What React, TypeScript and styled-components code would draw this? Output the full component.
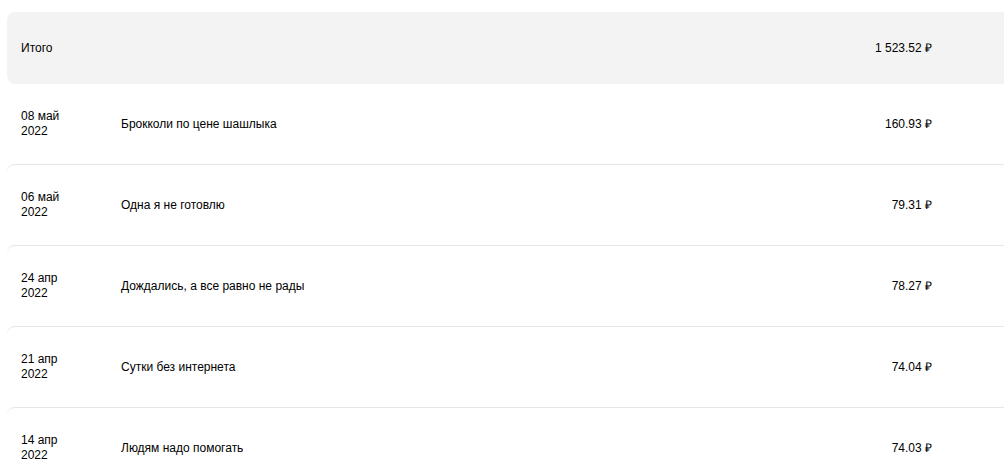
import React from "react";
import styled, { createGlobalStyle } from "styled-components";

const GlobalStyle = createGlobalStyle`
  html, body {
    margin: 0;
    padding: 0;
    background: #fff;
    overflow: hidden;
  }
  body {
    font-family: "Liberation Sans", Arial, sans-serif;
    color: #000;
  }
`;

const operations = [
  { day: "08 май", year: "2022", title: "Брокколи по цене шашлыка", amount: "160.93 ₽" },
  { day: "06 май", year: "2022", title: "Одна я не готовлю", amount: "79.31 ₽" },
  { day: "24 апр", year: "2022", title: "Дождались, а все равно не рады", amount: "78.27 ₽" },
  { day: "21 апр", year: "2022", title: "Сутки без интернета", amount: "74.04 ₽" },
  { day: "14 апр", year: "2022", title: "Людям надо помогать", amount: "74.03 ₽" },
];

const Page = styled.div`
  padding: 12px 0 0 7px;
  width: 1010px;
`;

const TotalBox = styled.div`
  display: grid;
  grid-template-columns: 100px 1fr auto;
  align-items: center;
  height: 72px;
  padding: 0 85px 0 14px;
  background: #f3f3f3;
  border-radius: 8px;
  font-size: 12px;
  line-height: 16px;
`;

const List = styled.div`
  display: flex;
  flex-direction: column;
`;

const Row = styled.div<{ $first?: boolean }>`
  display: grid;
  grid-template-columns: 100px 1fr auto;
  align-items: center;
  height: 80px;
  padding: 0 85px 0 14px;
  border-top: ${(p) => (p.$first ? "none" : "1px solid #e6e6e6")};
  border-radius: 8px 0 0 0;
  font-size: 12px;
  line-height: 15px;
`;

const DateCell = styled.div`
  display: flex;
  flex-direction: column;
`;

const Title = styled.div``;

const Amount = styled.div`
  text-align: right;
  white-space: nowrap;
`;

export default function App() {
  return (
    <>
      <GlobalStyle />
      <Page>
        <TotalBox>
          <div>Итого</div>
          <div />
          <Amount>1 523.52 ₽</Amount>
        </TotalBox>
        <List>
          {operations.map((op, i) => (
            <Row key={i} $first={i === 0}>
              <DateCell>
                <span>{op.day}</span>
                <span>{op.year}</span>
              </DateCell>
              <Title>{op.title}</Title>
              <Amount>{op.amount}</Amount>
            </Row>
          ))}
        </List>
      </Page>
    </>
  );
}
